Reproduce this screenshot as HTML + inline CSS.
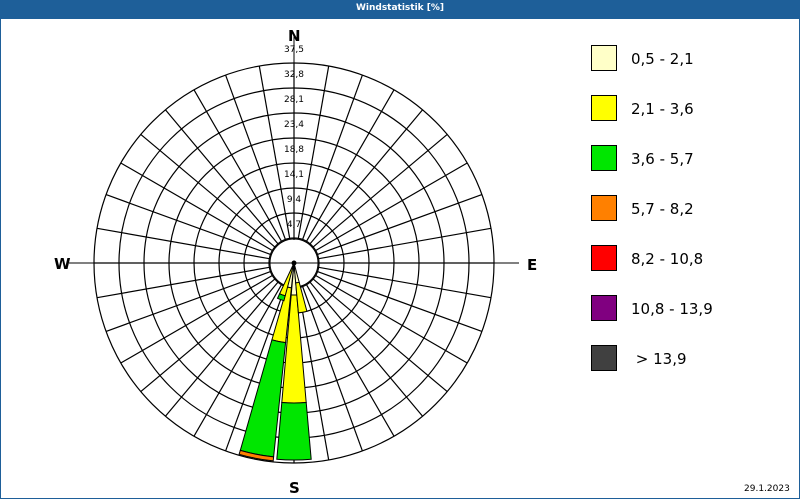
<!DOCTYPE html>
<html><head><meta charset="utf-8"><style>
html,body{margin:0;padding:0;background:#fff}
#w{position:relative;width:798px;height:498px;border:1px solid #1e5f99;border-top:none;overflow:hidden;font-family:"DejaVu Sans","Liberation Sans",sans-serif}
#t{position:absolute;left:0;top:0;width:798px;height:19px;background:#1e5f99;color:#fff;font-weight:bold;font-size:9px;text-align:center;line-height:17px}
svg{position:absolute;left:0;top:0}
.lb{position:absolute;left:590px;width:24px;height:24px;border:1px solid #000}
.lt{position:absolute;left:630px;font-size:15px;color:#000}
.d{position:absolute;font-weight:bold;font-size:15px}
.r{position:absolute;font-size:9px;color:#000;width:40px;text-align:center}
</style></head><body><div id="w">
<div id="t">Windstatistik [%]</div>
<svg id="s" width="798" height="498"></svg>
<div class="d" style="left:287px;top:27px">N</div>
<div class="d" style="left:288px;top:479px">S</div>
<div class="d" style="left:53px;top:255px">W</div>
<div class="d" style="left:526px;top:256px">E</div>
<div class="r" style="left:273px;top:45px">37,5</div>
<div class="r" style="left:273px;top:70px">32,8</div>
<div class="r" style="left:273px;top:95px">28,1</div>
<div class="r" style="left:273px;top:120px">23,4</div>
<div class="r" style="left:273px;top:145px">18,8</div>
<div class="r" style="left:273px;top:170px">14,1</div>
<div class="r" style="left:273px;top:195px">9,4</div>
<div class="r" style="left:273px;top:220px">4,7</div>
<div class="lb" style="top:45px;background:#ffffc8"></div><div class="lt" style="top:50px">0,5 - 2,1</div>
<div class="lb" style="top:95px;background:#ffff00"></div><div class="lt" style="top:100px">2,1 - 3,6</div>
<div class="lb" style="top:145px;background:#00e600"></div><div class="lt" style="top:150px">3,6 - 5,7</div>
<div class="lb" style="top:195px;background:#ff8000"></div><div class="lt" style="top:200px">5,7 - 8,2</div>
<div class="lb" style="top:245px;background:#ff0000"></div><div class="lt" style="top:250px">8,2 - 10,8</div>
<div class="lb" style="top:295px;background:#800080"></div><div class="lt" style="top:300px">10,8 - 13,9</div>
<div class="lb" style="top:345px;background:#404040"></div><div class="lt" style="top:350px">&nbsp;&gt; 13,9</div>
<div style="position:absolute;left:743px;top:484px;font-size:9px">29.1.2023</div>
</div>
<script>
var cx=293,cy=263,s='';
function P(r,a){a=a*Math.PI/180;return (cx+r*Math.sin(a)).toFixed(1)+','+(cy-r*Math.cos(a)).toFixed(1);}
for(var r=25;r<=200;r+=25)s+='<circle cx="'+cx+'" cy="'+cy+'" r="'+r+'" fill="none" stroke="#000" stroke-width="1.2"/>';
s+='<circle cx="'+cx+'" cy="'+cy+'" r="24" fill="#fff" stroke="#000"/>';
for(var a=0;a<360;a+=10)s+='<line x1="'+P(25,a).split(',')[0]+'" y1="'+P(25,a).split(',')[1]+'" x2="'+P(200,a).split(',')[0]+'" y2="'+P(200,a).split(',')[1]+'" stroke="#000" stroke-width="1.2"/>';
s+='<line x1="'+cx+'" y1="35" x2="'+cx+'" y2="240" stroke="#000"/>';
s+='<line x1="68" y1="'+cy+'" x2="518" y2="'+cy+'" stroke="#000"/>';
function W(a,r0,r1,c){var a0=a-5,a1=a+5;s+='<path d="M'+P(r0,a0)+' L'+P(r1,a0)+' A'+r1+','+r1+' 0 0 1 '+P(r1,a1)+' L'+P(r0,a1)+(r0>0?' A'+r0+','+r0+' 0 0 0 '+P(r0,a0):'')+'Z" fill="'+c+'" stroke="#000" stroke-width="1"/>';}
W(180,0,32,'#ffffc8');W(180,32,140,'#ffff00');W(180,140,197,'#00e600');
W(191,0,25,'#ffffc8');W(191,25,80,'#ffff00');W(191,80,195,'#00e600');W(191,195,199,'#ff8000');
W(170,0,20,'#ffffc8');W(170,20,50,'#ffff00');
W(200,0,34,'#ffff00');W(200,34,39,'#00e600');
s+='<circle cx="'+cx+'" cy="'+cy+'" r="2.5" fill="#000"/>';
document.getElementById('s').innerHTML=s;
</script>
</body></html>
